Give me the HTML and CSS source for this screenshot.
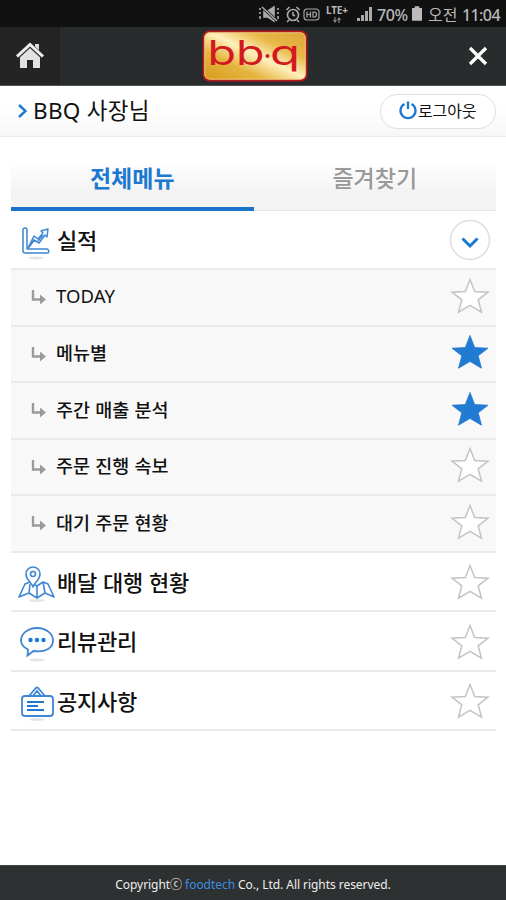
FILE: index.html
```html
<!DOCTYPE html>
<html lang="ko">
<head>
<meta charset="utf-8">
<title>BBQ</title>
<link rel="stylesheet" href="styles.css">
</head>
<body>
<svg class="defs" width="0" height="0" aria-hidden="true">
  <symbol id="star" viewBox="0 0 40 38"><path d="M20 2.5 24.7 14.6 38 15.2 28.2 22.8 31.5 35.2 20 28.4 8.5 35.2 11.8 22.8 2 15.2 15.3 14.6Z"/></symbol>
  <symbol id="sub" viewBox="0 0 16 16"><path d="M2 1V10.5H10" fill="none" stroke="#9b9b9b" stroke-width="2.4"/><path d="M9 5.5 15 10.5 9 15.5Z" fill="#9b9b9b"/></symbol>
</svg>
<div class="status">
  <svg class="status-icons" width="62" height="20" viewBox="0 0 62 20" fill="none" stroke="#aaa" stroke-width="1.6">
    <path d="M6 7h4l6-4v14l-6-4H6z" fill="#aaa"/><path d="M2 4v2M2 8v2M2 12v3M20 4v2M20 8v2M20 12v3"/><path d="M4 3 19 17" stroke="#111" stroke-width="3"/><path d="M4 3 19 17"/>
    <circle cx="35" cy="11" r="5.5"/><path d="M35 8v3l2 1M28.5 6l3-3M41.5 6l-3-3M31 16l-2 2M39 16l2 2"/>
    <rect x="46" y="5" width="15" height="11" rx="3" stroke-width="1.1"/><path d="M49 7.500v6M52.500 7.500v6M49 10.500h3.500M55 8h1.500q2 0 2 2.500t-2 2.500H55z" stroke-width="1.200"/>
  </svg>
  <div class="lte"><span>LTE+</span><svg width="24" height="6" viewBox="0 0 24 6" fill="none" stroke="#888" stroke-width="1.200"><path d="M9 0v5M7.500 3 9 5l1.500-2M13 6V1M11.500 3 13 1l1.500 2"/></svg></div>
  <svg class="signal" width="17" height="16" viewBox="0 0 17 16" fill="#aaa"><path d="M1 12h3v3H1zM5 9h3v6H5zM9 5h3v10H9zM13 1h3v14h-3z"/></svg>
  <span class="percent">70%</span>
  <svg class="battery" width="10" height="15" viewBox="0 0 11 16"><path d="M3 0h5v2h3v14H0V2h3z" fill="#bbb"/></svg>
  <span class="ampm">오전</span><span class="clock">11:04</span>
</div>
<header class="header">
  <div class="home">
    <svg width="30" height="28" viewBox="0 0 30 28"><path d="M20 2h4v8l-4-4z" fill="#ddd"/><path d="M5 14 15 5l10 9v12h-7v-8h-6v8H5z" fill="#e2e2e2"/><path d="M2 15 15 3l13 12" fill="none" stroke="#333" stroke-width="4.500"/><path d="M2 14.500 15 2.500 28 14.500" fill="none" stroke="#eee" stroke-width="3"/></svg>
  </div>
  <svg class="logo" width="106" height="52" viewBox="0 0 106 52">
    <defs><linearGradient id="gold" x1="0" y1="1" x2="1" y2="0"><stop offset="0" stop-color="#d59c1d"/><stop offset=".3" stop-color="#e5b43f"/><stop offset=".52" stop-color="#fff0bd"/><stop offset=".72" stop-color="#e7b947"/><stop offset="1" stop-color="#d9a336"/></linearGradient></defs>
    <rect x="1.500" y="1.500" width="103" height="49" rx="6" fill="url(#gold)" stroke="#b81620" stroke-width="1.800"/>
    <rect x="2.800" y="2.800" width="100.400" height="46.400" rx="5" fill="none" stroke="#f2d98c" stroke-width=".8"/>
    <text class="logo-text" x="5.500" y="34.500" textLength="57" lengthAdjust="spacingAndGlyphs">bb</text>
    <circle cx="65.500" cy="26" r="2" fill="#d3191f"/>
    <text class="logo-text" x="68" y="34.500" textLength="30" lengthAdjust="spacingAndGlyphs">q</text>
  </svg>
  <svg class="close" width="22" height="22" viewBox="0 0 22 22"><path d="M3 3 19 19M19 3 3 19" stroke="#fff" stroke-width="3.200"/></svg>
</header>
<section class="user">
  <svg class="caret" width="11" height="16" viewBox="0 0 11 16"><path d="M2 2 8.500 8 2 14" fill="none" stroke="#1c79d0" stroke-width="2.400"/></svg>
  <span class="username">BBQ 사장님</span>
  <div class="logout">
    <svg width="20" height="20" viewBox="0 0 20 20" fill="none" stroke="#1c79d0" stroke-width="2.300"><path d="M6.500 4A7.500 7.500 0 1 0 13.500 4M10 1.500V9"/></svg><span>로그아웃</span>
  </div>
</section>
<main class="main">
  <nav class="tabs"><div class="tab active">전체메뉴</div><div class="tab">즐겨찾기</div></nav>
  <div class="row top first">
    <svg class="icon" width="40" height="38" viewBox="0 0 40 38"><ellipse cx="20" cy="36" rx="8" ry="1.500" fill="#e4e4e4"/><g fill="#fff" stroke="#3f86d3" stroke-width="1.500" stroke-linejoin="round"><path d="M7 7q2-2 4 0v20h20q3 1.500 1 4H9q-2 0-2-2z"/><path d="M12 26 18 14l4 3 5-6-2-2 7-2-1 8-2-2-6 8-5-3-5 7z"/><path d="m13 25 5-7M22 19l5-6"/></g></svg>
    <span>실적</span>
    <svg class="expand" width="42" height="42" viewBox="0 0 42 42"><circle cx="21" cy="21" r="19.500" fill="#fff" stroke="#dedede" stroke-width="1.500"/><path d="m13.500 19.500 7.500 7.500 7.500-7.500" fill="none" stroke="#1c79d0" stroke-width="3"/></svg>
  </div>
  <div class="row sub"><svg class="arrow"><use href="#sub"/></svg><span class="latin">TODAY</span><svg class="star"><use href="#star"/></svg></div>
  <div class="row sub"><svg class="arrow"><use href="#sub"/></svg><span>메뉴별</span><svg class="star on"><use href="#star"/></svg></div>
  <div class="row sub"><svg class="arrow"><use href="#sub"/></svg><span>주간 매출 분석</span><svg class="star on"><use href="#star"/></svg></div>
  <div class="row sub"><svg class="arrow"><use href="#sub"/></svg><span>주문 진행 속보</span><svg class="star"><use href="#star"/></svg></div>
  <div class="row sub"><svg class="arrow"><use href="#sub"/></svg><span>대기 주문 현황</span><svg class="star"><use href="#star"/></svg></div>
  <div class="row top">
    <svg class="icon" width="40" height="38" viewBox="0 0 40 38"><ellipse cx="20" cy="35.500" rx="8" ry="1.500" fill="#e4e4e4"/><g fill="#fff" stroke="#3f86d3" stroke-width="1.600" stroke-linejoin="round"><path d="M8 19 2 32l10-4 8 5 8-5 9 4-6-13-5-2-6 4-7-4zM12 28l1-9M20 33V21M28 28l-2-11"/><path d="M16 22c-1-5-7-6-7-13a7 7 0 0 1 14 0c0 7-6 8-7 13z"/><circle cx="16" cy="9" r="2.500"/></g></svg>
    <span>배달 대행 현황</span><svg class="star"><use href="#star"/></svg>
  </div>
  <div class="row top">
    <svg class="icon" width="40" height="38" viewBox="0 0 40 38"><ellipse cx="20" cy="36" rx="8" ry="1.500" fill="#e4e4e4"/><path d="M20 4C11 4 4 9.500 4 16.500c0 4 3 7 7 9l-.5 6 6-4.500c13 2 19.500-4 19.500-10.500C36 9.500 29 4 20 4z" fill="#fff" stroke="#3f86d3" stroke-width="1.800"/><g fill="#1c79d0"><circle cx="13.500" cy="16" r="2.200"/><circle cx="20" cy="16" r="2.200"/><circle cx="26.500" cy="16" r="2.200"/></g></svg>
    <span>리뷰관리</span><svg class="star"><use href="#star"/></svg>
  </div>
  <div class="row top">
    <svg class="icon" width="40" height="38" viewBox="0 0 40 38"><ellipse cx="20" cy="35.500" rx="8" ry="1.500" fill="#e4e4e4"/><g fill="none" stroke="#3f86d3" stroke-width="1.800"><path d="m12 12 6-7q2-3 4 0l6 7M16 12l4-5 4 5"/><rect x="5" y="12" width="31" height="20" rx="3" fill="#fff"/><path d="M10 18h17M10 22h11M10 26h17" stroke="#1c79d0"/></g></svg>
    <span>공지사항</span><svg class="star"><use href="#star"/></svg>
  </div>
</main>
<footer class="footer"><span>Copyrightⓒ <b>foodtech</b> Co., Ltd. All rights reserved.</span></footer>
</body>
</html>
```
FILE: styles.css
```css
* { box-sizing: border-box; }
body { margin: 0; width: 506px; height: 900px; display: flex; flex-direction: column; background: #fff; color: #111; font-family: "Noto Sans", "Noto Sans CJK KR", sans-serif; overflow: hidden; white-space: nowrap; }
svg { flex: none; display: block; }
.defs { position: absolute; }
.status { height: 27px; flex: none; background: #111; color: #b8b8b8; display: flex; align-items: center; padding-left: 258px; line-height: 20px; }
.lte { width: 27px; margin-left: 6px; font-size: 10px; font-weight: 700; line-height: 14px; letter-spacing: -.2px; height: 22px; }
.signal { margin-left: 3px; }
.percent { margin-left: 4px; padding-top: 3px; font-size: 16px; width: 34px; font-weight: 500; letter-spacing: -.4px; }
.battery { margin-left: 1px; }
.ampm { margin-left: 6px; font-family: "Noto Sans CJK KR", sans-serif; font-size: 16px; width: 34px; }
.clock { font-size: 16px; padding-top: 3px; letter-spacing: -.6px; font-weight: 500; }
.header { height: 59px; flex: none; display: flex; align-items: center; background: #292c2d; border-bottom: 1px solid #555; }
.home { width: 60px; height: 58px; display: flex; align-items: center; justify-content: center; background: #242424; border-right: 1px solid #202222; }
.logo { margin-left: 142px; }
.logo-text { font-family: Inter, sans-serif; font-size: 34px; fill: #d3191f; }
.close { margin-left: auto; margin-right: 17px; }
.user { height: 51px; flex: none; display: flex; align-items: center; padding: 0 10px 0 17px; border-bottom: 1px solid #e9e9e9; background: linear-gradient(#fff 40%, #f7f7f7); }
.username { margin-left: 5px; font-size: 22.5px; line-height: 30px; letter-spacing: .3px; }
.logout { margin-left: auto; width: 116px; height: 35px; border: 1.5px solid #dedfe2; border-radius: 18px; display: flex; align-items: center; padding: 0 0 2px 17px; background: #fff; font-size: 16px; letter-spacing: -.1px; }
.main { width: 485px; margin-left: 11px; flex: none; }
.tabs { height: 74px; display: flex; background: linear-gradient(#fff 35%, #f3f3f3 75%); border-bottom: 1px solid #e2e2e2; }
.tab { width: 243px; height: 74px; display: flex; align-items: center; justify-content: center; padding-top: 7px; font-size: 23px; font-weight: 500; color: #999; line-height: 32px; }
.active { color: #1c79d0; font-weight: 700; border-bottom: 4px solid #1c73ca; padding-top: 11px; }
.row { display: flex; align-items: center; border-bottom: 2px solid #e9e9e9; }
.top { height: 59.6px; font-size: 22px; line-height: 30px; font-weight: 500; padding-left: 6px; }
.top span { width: 150px; font-family: "Noto Sans CJK KR", sans-serif; letter-spacing: -.2px; padding-bottom: 1px; }
.top .star { margin-top: 2px; }
.icon { width: 40px; margin-top: 5px; }
.first { height: 59px; }
.first .icon { margin: 2px 1px 0 -1px; }
.sub { height: 56.5px; background: #f8f8f8; font-size: 18.5px; line-height: 26px; font-weight: 500; padding-left: 20px; }
.sub span { width: 150px; margin-left: 9px; font-family: "Noto Sans CJK KR", sans-serif; padding-bottom: 3px; }
.sub .latin { font-family: "Noto Sans", sans-serif; letter-spacing: .1px; font-weight: 400; }
.arrow { width: 16px; height: 16px; }
.star { width: 40px; height: 38px; margin-left: auto; margin-right: 6px; margin-top: -3px; fill: #fff; stroke: #c4c4c4; stroke-width: 1.5; }
.on { fill: #217bd2; stroke: #217bd2; stroke-width: .8; }
.expand { margin-left: auto; margin-right: 5px; }
.footer { height: 35px; flex: none; margin-top: auto; background: #2e3131; border-top: 1px solid #444; color: #eee; display: flex; align-items: center; justify-content: center; font-size: 12px; line-height: 20px; padding-top: 3px; letter-spacing: -.05px; }
.footer b { font-weight: 400; color: #3c8ee0; }
```
